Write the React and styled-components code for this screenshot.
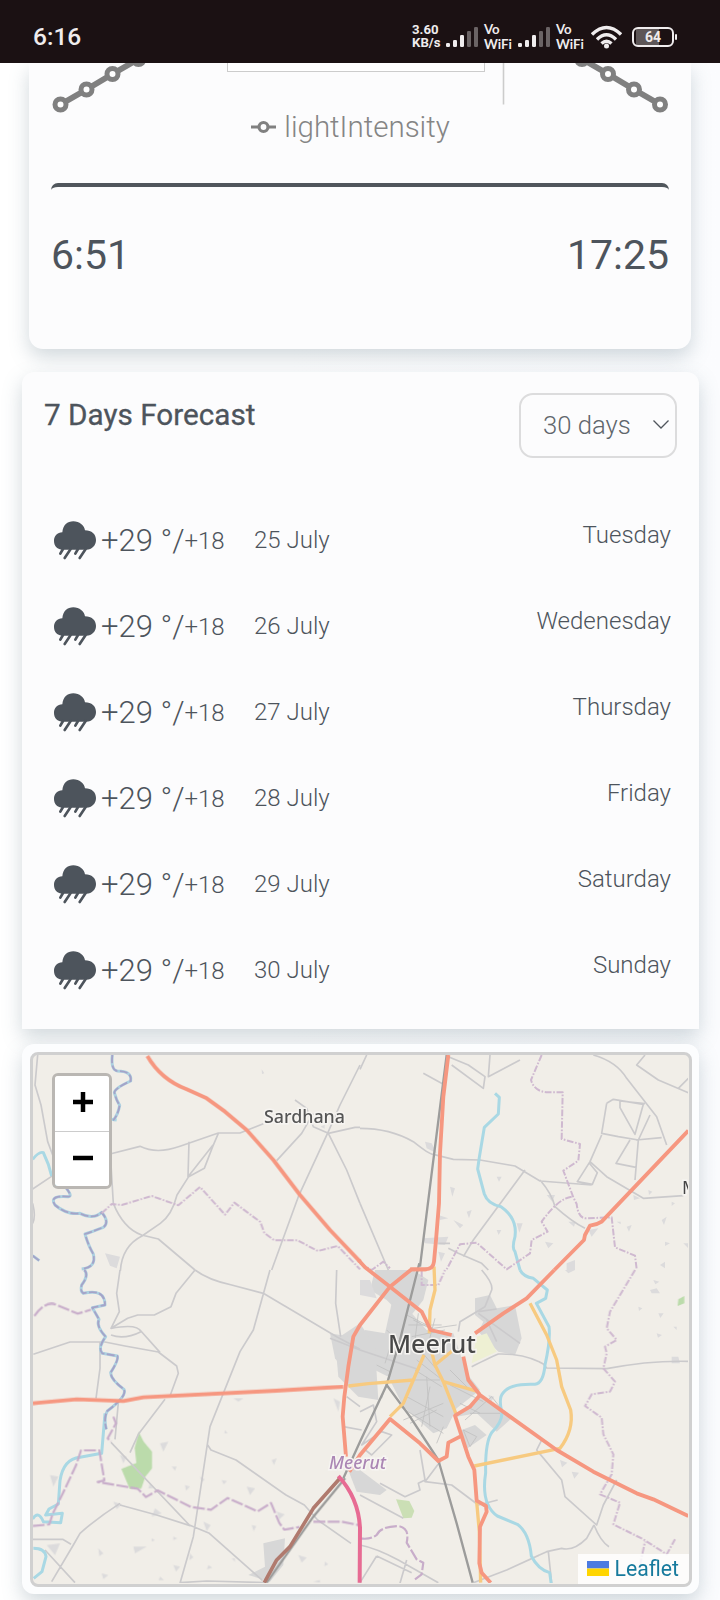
import React from "react";
import styled, { createGlobalStyle } from "styled-components";

const GlobalStyle = createGlobalStyle`
  * { box-sizing: border-box; }
  body { margin: 0; background: #fff; font-family: Roboto, "Liberation Sans", sans-serif; }
`;

const Screen = styled.div`
  width: 720px;
  height: 1600px;
  overflow: hidden;
  background: linear-gradient(90deg, #fff 40%, #fbfcfe);
  color: #4d545c;
`;

const StatusBar = styled.header`
  position: relative;
  z-index: 2;
  display: flex;
  align-items: center;
  justify-content: space-between;
  height: 62.5px;
  padding: 11px 42px 0 33px;
  background: #1b1113;
  color: #efeced;
`;
const Clock = styled.span`
  font-size: 24.5px;
  font-weight: 500;
`;
const StatusIcons = styled.div`
  display: flex;
  align-items: center;
`;
const Stack = styled.div`
  width: ${(p) => p.$width}px;
  margin-right: ${(p) => p.$gap}px;
  font-family: ${(p) => p.$family || "Roboto"}, sans-serif;
  font-size: ${(p) => p.$size}px;
  font-weight: 700;
  line-height: ${(p) => p.$line}px;
  white-space: nowrap;
`;
const SignalSvg = styled.svg`
  width: 32px;
  height: 22px;
  margin-right: 6px;
`;
const WifiSvg = styled.svg`
  width: 31px;
  height: 24px;
  margin: 0 10px 0 0;
`;
const Battery = styled.div`
  position: relative;
  display: flex;
  align-items: center;
  justify-content: center;
  width: 42px;
  height: 20px;
  margin-right: 4px;
  border: 2px solid #f0edee;
  border-radius: 6px;
  background: linear-gradient(90deg, #1b1113 2px, #5d5657 2px, #5d5657 25px, #1b1113 25px);
  font-size: 14px;
  font-weight: 700;
  &::after {
    content: "";
    position: absolute;
    right: -5px;
    width: 2px;
    height: 6px;
    border-radius: 1px;
    background: #f0edee;
  }
`;

const shadow = "0 8px 20px rgba(90, 116, 130, 0.28)";

const SunCard = styled.section`
  height: 286.5px;
  margin: 0 29px;
  border-radius: 0 0 14px 14px;
  background: #fcfcfd;
  box-shadow: ${shadow};
`;
const ChartSvg = styled.svg`
  display: block;
  width: 662px;
  height: 44px;
  overflow: visible;
`;
const Legend = styled.div`
  display: flex;
  align-items: center;
  justify-content: center;
  gap: 8px;
  height: 40px;
  padding-right: 19px;
  color: #858585;
  font-size: 29.5px;
  font-weight: 300;
`;
const Divider = styled.div`
  height: 14px;
  margin: 36.5px 22px 0;
  border-top: 4px solid #50565c;
  border-radius: 8px;
`;
const Times = styled.div`
  display: flex;
  justify-content: space-between;
  margin: 33px 22px 0;
  font-size: 41px;
  line-height: 50px;
`;

const ForecastCard = styled.section`
  position: relative;
  height: 657px;
  margin: 23px 21px 0 22px;
  padding: 21px 22px 0;
  border-radius: 12px 12px 0 0;
  background: #fcfcfd;
  box-shadow: ${shadow};
`;
const ForecastHead = styled.div`
  display: flex;
  justify-content: space-between;
  height: 100px;
`;
const Title = styled.h2`
  margin: 5px 0 0;
  font-size: 29.7px;
  font-weight: 400;
  line-height: 34px;
  -webkit-text-stroke: 0.3px currentColor;
`;
const Select = styled.button`
  display: flex;
  align-items: center;
  justify-content: space-between;
  width: 158px;
  height: 65px;
  padding: 0 6px 2px 22px;
  border: 2px solid #dcdcdd;
  border-radius: 14px;
  background: #fcfcfd;
  color: #60666c;
  font: 300 25.7px Roboto, sans-serif;
`;
const DayRow = styled.div`
  display: flex;
  align-items: center;
  height: 86px;
  padding: 8px 6px 0 10px;
`;
const RainSvg = styled.svg`
  width: 42px;
  height: 39px;
`;
const Temp = styled.div`
  width: 144px;
  margin-left: 5px;
  padding-right: 4px;
  font-size: 31px;
  font-weight: 300;
  white-space: nowrap;
  small {
    font-size: 24px;
    line-height: 1;
    vertical-align: 2px;
  }
`;
const DateText = styled.span`
  margin-left: 9px;
  font-size: 24px;
  font-weight: 300;
`;
const Weekday = styled(DateText)`
  margin: -11px 0 0 auto;
`;

const MapCard = styled.section`
  position: relative;
  height: 550px;
  margin: 15px 21px 0 22px;
  padding: 7.5px;
  border-radius: 12px;
  background: #fcfdfe;
  box-shadow: ${shadow};
`;
const MapFrame = styled.div`
  position: relative;
  height: 535px;
  border: 3.5px solid #d0d0d0;
  border-radius: 8px;
  overflow: hidden;
  background: #f1eee8;
`;
const MapSvg = styled.svg`
  display: block;
  width: 655px;
  height: 528px;
`;
const ZoomControl = styled.div`
  position: absolute;
  left: 19px;
  top: 18px;
  width: 60px;
  border: 3px solid #bab7b3;
  border-radius: 6px;
  overflow: hidden;
`;
const ZoomButton = styled.button`
  display: flex;
  align-items: center;
  justify-content: center;
  width: 100%;
  height: 55px;
  padding: 0 0 2px 2px;
  border: 0;
  border-top: ${(p) => (p.$divided ? "1px solid #ccc" : "0")};
  background: #fff;
`;
const Attribution = styled.div`
  position: absolute;
  right: 0;
  bottom: 0;
  display: flex;
  align-items: center;
  gap: 6px;
  width: 111px;
  height: 30px;
  padding: 0 0 1px 9px;
  background: rgba(255, 255, 255, 0.82);
  color: #177a9d;
  font-size: 21.2px;
`;

const Signal = () => (
  <SignalSvg viewBox="0 0 32 22">
    {[[0, 4], [7, 7], [14, 12], [21, 16], [28, 20]].map(([x, h], i) => (
      <rect key={x} x={x} y={21 - h} width="4" height={h} rx="1.2" fill={i < 3 ? "#f0edee" : "#6b6465"} />
    ))}
  </SignalSvg>
);

const Rain = () => (
  <RainSvg viewBox="0 0 126 117">
    <path fill="#4d545c" d="M25 34C27 12 40 1 58 1s33 13 35 27c20 0 33 12 33 29 0 16-12 29-29 29H27C10 86 0 75 0 60c0-15 10-25 25-26Z" />
    <path stroke="#4d545c" strokeWidth="8" strokeLinecap="round" d="M27 84 19 98M50 84 32 111M72 84 64 98M95 84 77 111" />
  </RainSvg>
);

const leftDots = [[31.5, 41.5], [57.5, 26.5], [83.5, 11], [109.5, -4]];
const rightDots = [[631, 41.5], [605, 26.5], [579, 11], [553, -4]];

/* Each feature is drawn in one of four map quadrants, three units per pixel. */
const quadrants = {
  nw: "translate(0 940) scale(.33333)",
  ne: "translate(360 940) scale(.33333)",
  sw: "translate(0 1270) scale(.33333)",
  se: "translate(360 1270) scale(.33333)",
};

const streams = [
  ["nw", "M337 345q-5 45 15 48 45 0 40 30-55 25-48 38 5 20 15 35-5 30-20 45M195 740q25 30 10 30-60-5-40 25 35 30 75 25 40 20 65-3 25 30 5 45-40 15-55 20 10 35 25 60 10 40-35 45M98 947l20 15"],
  ["sw", "M253 0q15 15-8 45-5 20 5 25 65-15 65 35l-38 8 20 35q-10 20 20 52-25 35-10 50l45 8q5 10-20 50 0 20 40 50 10 20-50 65-12 20-3 55"],
];

const layers = [
  { name: "urban", fill: "#d7d7d7", paths: [
    ["se", "M45 0h115l45 30-15 60-40 50-30-10-40-40-50-30Z"],
    ["se", "M95 100l60 30 45 50 80 10 40 120 40 50-70 55-30 60-40 15-90-80-45-90-60-30-50-60 40-50 60 10Z"],
    ["se", "M345 85l45-10 20 40 55-10 20 100-20 50-50-10-60-60 15-30-25-20Z"],
    ["se", "M360 375l100 65-50 45-60-55-60 10Z"],
    ["se", "M305 480l40-15 35 30-65 45Z"],
    ["se", "M-75 210l75-50 45 70 10 160-60-10-60-60Z"],
    ["se", "M-45 575l45 25 80 60-20 15-70-10Z"],
    ["sw", "M990 190l60 10-10 110-35-45Z"],
    ["sw", "M790 820l65-15-5 80-40 50-65-20 50-25Z"],
  ] },
  { name: "park", fill: "#b5d9a4", opacity: 0.9, paths: [
    ["sw", "M416 485l15 30 25 30v50l-20 25-12 35-35 2-25-60 45-18-5-45Z"],
    ["se", "M955 88l18-10v22l-20 8Z"],
  ] },
  { name: "grove", fill: "#cbdfb5", paths: [["se", "M108 688l40 5 15 30-8 20-25 2Z"]] },
  { name: "field", fill: "#eef0d3", paths: [["se", "M350 200l30-10 30 55-75 35Z"]] },
  { name: "hamlet", fill: "#dcdbdc", paths: [
    ["nw", "M315 940l45 10-10 35-20-8ZM785 388l8 12-7 2ZM962 560l12-6v12Z"],
    ["ne", "M195 605l20 5 15 30-30-15ZM270 740l15 5-8 25ZM320 815l15-5-8 25ZM280 840l30 15-10 10ZM410 710h15l-8 15ZM410 870h14l-8 15ZM560 765h25l-8 20ZM470 850h18l-10 28ZM555 905l25 5-15 15ZM625 845h22l-5 15ZM685 870l30-5-20 25ZM905 840l15-10-8 25ZM935 785l10 5-10 8ZM915 905l15 5-15 8ZM970 910h15v15ZM900 975l15-10v20ZM800 860l15-5-8 20ZM770 845h12v8ZM865 750l12 5-10 10ZM820 765l20 10-18 5ZM235 825l30 10-25 5ZM190 895l75-5-10 25-60-5ZM620 970l25-10v30h-25ZM235 935l20 5-12 25Z"],
    ["sw", "M360 555l20 5-10 20ZM480 520l25-5-15 30ZM515 590h15l-5 12ZM555 645l15 5-12 12ZM450 640l10 15h-15ZM600 620l14 8-8 8ZM815 570l15-5-8 20ZM740 650l25 5-15 20ZM665 630l16 3-10 10ZM340 695l25 8-15 14ZM465 715l20 15-30 10ZM610 755l22 10-12 18ZM755 765l14 3-8 15ZM830 725l24 8-16 15ZM150 615l25 5-15 30ZM295 835l15 15-12 8ZM400 830l40 0-35 20ZM455 805l10 5-10 5ZM520 800l12 5-12 5ZM570 850l10 12-12 8ZM520 885l20 5-12 15ZM625 885l12 8-16 5ZM695 865h10v10ZM895 855l25 8-15 15ZM975 875l10 8-12 5ZM305 910l20 5-15 12ZM480 920l12 10h-16ZM140 825l40-5-15 35ZM700 385h30l-15 10ZM675 480l8 10h-10ZM1000 385l20 10-5 30ZM940 935l20-5v8Z"],
    ["se", "M870 60l20-5 10 15h-25ZM880 30l18 5-12 8ZM835 110l12 5-10 8ZM895 130h16l-10 14ZM890 190l16 5-12 8ZM935 260h20l5 20h-25ZM600 570l22 8-16 14ZM635 605l22 3-14 18ZM385 375l18 5-10 15ZM0 30h30l20 55-50-10ZM615 0h30l-20 10ZM940 170h10v10Z"],
  ] },
  { name: "street", stroke: "#cbcacc", width: 5, paths: [
    ["nw", "M113 345l-8 90 18 60 20 110 15 40M98 747l60-40M330 642l90-23q50 25 120 0l115-40h65l70-28M655 580l-17 40-25 65-47 25-35 55q-15 60-50 85l-55 38q-60 30-65 105M567 605l-3 105 75-95M323 510l17 280q30 75 85 95l50 12 110 93M1080 375l-60 120-35 80-90 195-80 220M985 580l80-18h15M985 580l-45-20-20-55-35-25M985 580l55 110 40 100M940 520l-35 60-75 82M98 790q10 40 0 60"],
    ["ne", "M0 388l20-43M0 565q90 0 160 40 50 40 60 38l60 15 80 2 105 18 75 45 155 12M0 790l85 200M265 350l60 25 50 35-5 35-95-70M390 345l-5 65 95-50M190 400l60 33M495 690l-155 210-30 50M540 720q35 40 45 80 50 45 90 65M700 345q70 20 100 70l90 115 30 85M855 345l-25 30 65 45 90 38M955 445l30-30M740 490l20-12 90 15-25 90-45-80 0-20 75 8M740 490l-15 90 50 10 60 10 35-75M905 593l-77 7M725 585l-35 80-38 60 45 8 15-35-25-30M690 665l50 45 110 65 120-8M835 600l-10 120M810 600l-42 70 60 12M265 925l30 15 70 30 20 20M270 910h-35"],
    ["sw", "M100 253l110-37h105l60 12 100 18M475 246l55 42 5 22-25 68M360 0l-10 70 8 55-25 50 50-30 30-10h50l50-25 15-40L585 0M333 175q80-15 90 10-50 25-90 10M420 180l60 67M585 0q40 30 110 45l95 25 220 130 70 38M810 0l-50 180-40 65-90 225-50 330-40 140M1010 0l-3 100 15 100M300 215v80l-12 90M495 388l-80 105-25 55M333 517l235 248 60 25 160 142M623 525l10 15 75 30 150 105 55 30 40 45 100 70M360 705l110 30 100 32M360 700q-70 45-120 90l-20 35-65 110M98 808h90l25 15M135 840l90 98M355 398l-10 110M540 938l80-5 180 5M1030 470l55 10M1040 380l40 30"],
    ["se", "M-90 205l90 35 180 60M335 290q60-30 80-38 80-2 135 30l10 12 180 2q130-25 245-22M365 0q35 40 30 60l-20 50-75 45-5 30M355 125l55-8M355 130l125 90M380 150l30 65M0 425l40-20 10 50-45 70 60-40 30 10-60 60-25-20M180 540l15 90-20 10 5 20-45 20-75-40M240 575l-45 60 80 10 80 60 58-15M545 510l-15 30 75 90 10 50 95 85 20-60 40-75M702 765l-22 40q-40 40-75 30l-45 10-120 55-100 38M702 765q20 50 45 65M565 845l10 95M0 825q50 10 115 45l120 68M50 858l-50 80M130 745l-130-70M50 858l105 50M140 870l-20 70"],
  ] },
  { name: "block", stroke: "#c0c0c1", width: 2.5, paths: [
    ["se", "M140 135l80 40 70-10M145 165h100M155 200l100-20M160 150l80 40M175 130l-10 80M225 145l-25 95M170 270l90 70M165 300l80 50M180 240l60 70M150 330l90 0M210 350l-25 120M140 380l110 60M120 410l130 80M200 320l10 150M250 400l-120 50M250 470l-20 50M270 300l60 60M270 345l100 50M330 430l90 0M315 450l80-70 40 50M310 480l40 20-20 30-20-50M300 400l60 30M150 460l80-40M80 180l20 20-25 80M50 285l40 20-25 80"],
  ] },
  { name: "river", stroke: "#a9d8e4", width: 9, paths: [
    ["nw", "M98 658q20-25 32-20l15 35 10 35M160 735q30 10 50 2M350 540l-40-5"],
    ["ne", "M405 460l13 12-3 50-42 40-15 90-5 35 20 75q10 30 50 38 50 35 42 90-10 35 0 45l15 55"],
    ["sw", "M315 430l-10 120-65 12q-50 5-60 70l-5 70-28 15-10 18 50-5-5 28-52-3q-15-35-32-8M100 835q35 0 38 25l-12 45-25 20"],
    ["se", "M480 0q10 20 40 25l42 35-5 25-28 15 38 70q5 40-12 115-5 55-30 58-75-3-95 25-15 15-5 55 5 30-30 65-20 30-18 120-15 95 35 130l60 25q35 25 42 95 20 40 55 50l18 130"],
  ] },
  { name: "stream", stroke: "#acd0e0", width: 9, paths: streams },
  { name: "stream-border", stroke: "#a5a3c8", width: 5.5, dash: "24 7", paths: streams },
  { name: "boundary", stroke: "#cfb9d0", width: 6, dash: "20 5 5 5", paths: [
    ["nw", "M305 820l30-28 30 3 90-27 80 28 65-55 75 83 28-36 78 58 12 33 30 22h70l60 32 60-15 67 70"],
    ["ne", "M545 345l-32 75q10 35 50 37h45l-3 140 55 15-5 50-45 30 30 80 10 20q5 45 30 43l75-3 10 90 60 25 5 40M635 770q-40 5-90 75l18 30-48 25-5 40-70 48-90-80-50 5-40 75M0 970l35 20 35-25 20 20"],
    ["se", "M825 0l-75 125-10 50 30 35-35 20 5 20-10 45 35 40-15 30-55 8-20 35 50 35 5 50 30 60-5 60-35 60 60 25-20 65 90 45 70 45 25-45M840 885l15-70M185 0v45h50l20-45"],
  ] },
  { name: "district", stroke: "#c8adca", width: 6.5, dash: "36 7", paths: [
    ["sw", "M103 138q35-50 70-32l60 25 40-12M98 768l50-5 10-32 30-60 40-85 15-45h55l15 90-20 5 120 20 25 25 35-20 100 50 60 8 50-35 90 40 40-25 25 60 15 20 45-8M940 755h85l50 10M340 440l8 20-25 45 10 10"],
    ["se", "M0 805q30 5 50-10 10-25 65-27 35 5 25 50l30 50 20 10-5 35-20 15"],
  ] },
  { name: "rail", stroke: "#9c9c9b", width: 7, paths: [
    ["ne", "M260 345L215 700 180 980"],
    ["se", "M178-20L120 210 80 345 0 515-50 625M80 345l70 95 85 130 55 190 48 178"],
    ["sw", "M1035 625l-95 115-140 198"],
  ] },
  { name: "secondary", stroke: "#f7ca80", width: 10, paths: [
    ["se", "M222-10l3 70-15 60-2 70M-35 348l60-7 135-11 32-75M160 330l-30 70-40 40M280 240l-55 45 25 50 40 102M250 335l105 30M215 245l10 40M510 100l50 95 30 75 15 80 27 70q10 60-32 115L343 588M350 695l8 90 4 153"],
  ] },
  { name: "trunk", stroke: "#f69780", width: 11.5, paths: [
    ["nw", "M442 348q40 70 118 100l60 27 55 40 65 55 80 90 80 105 90 105 90 95"],
    ["ne", "M265 345l-15 125-10 170-3 150-9 110-6 65q-2 23-27 23h-45M985 572L725 845q-15 10-35 12l-15 28-3 15-89 90"],
    ["sw", "M98 400l132-12 140 5 60-11 400-20 200-12"],
    ["se", "M-4-29L15-8l75 58 95 75 27 55 63 15M200-2h-45L90 50 0 165l-20 35-15 90-12 90-5 60 10 120M583 0l-83 85-70 45-85 60M310 260l15 70 35 45 90 65 140 100 110 65 130 65 50 18 105 50M360 375l-30 35-45 27 40 123 18 40 7 92 28 16 2 17-20 45-2 110 7 28 27 30M300 500l-35 18-5 42-25 13-55-53-90-73L0 555l-32 50"],
  ] },
  { name: "rail-main", stroke: "#b07a6e", width: 11, paths: [["sw", "M1020 625l-80 90-70 115-40 40-37 68"]] },
  { name: "motorway", stroke: "#e76b93", width: 12, paths: [["sw", "M1015 618q60 65 65 155l-1 165"]] },
];

const labelHalo = { stroke: "#f7f5f2", strokeWidth: 3, paintOrder: "stroke", fontFamily: "Noto Sans, sans-serif" };

const MeerutMap = () => (
  <MapSvg viewBox="33 1055 655 528" preserveAspectRatio="none">
    {layers.map((l) => (
      <g key={l.name} fill={l.fill || "none"} opacity={l.opacity} stroke={l.stroke} strokeWidth={l.width} strokeDasharray={l.dash} strokeLinejoin="round">
        {l.paths.map(([q, d]) => <path key={d} d={d} transform={quadrants[q]} />)}
      </g>
    ))}
    <text x="264" y="1123" fontSize="18.500" fontWeight="500" textLength="81" lengthAdjust="spacingAndGlyphs" fill="#555" {...labelHalo}>Sardhana</text>
    <text x="388" y="1352.5" fontSize="25" fontWeight="500" textLength="88" lengthAdjust="spacingAndGlyphs" fill="#484848" {...labelHalo}>Meerut</text>
    <text x="329" y="1469" fontSize="18.500" fontWeight="500" textLength="57" lengthAdjust="spacingAndGlyphs" fontStyle="italic" fill="#ab86b4" {...labelHalo}>Meerut</text>
    <text x="682" y="1193.5" fontSize="18" fill="#444" {...labelHalo}>M</text>
  </MapSvg>
);

const days = [
  ["25 July", "Tuesday"],
  ["26 July", "Wedenesday"],
  ["27 July", "Thursday"],
  ["28 July", "Friday"],
  ["29 July", "Saturday"],
  ["30 July", "Sunday"],
];

export default function App() {
  return (
    <Screen>
      <GlobalStyle />
      <StatusBar>
        <Clock>6:16</Clock>
        <StatusIcons>
          <Stack $width={28} $gap={6} $size={13.2} $line={12.8}>3.60<br />KB/s</Stack>
          <Signal />
          <Stack $width={28} $gap={6} $size={13.2} $line={14.5} $family="Lato">Vo<br />WiFi</Stack>
          <Signal />
          <Stack $width={28} $gap={7} $size={13.2} $line={14.5} $family="Lato">Vo<br />WiFi</Stack>
          <WifiSvg viewBox="0 0 31 24" fill="none" stroke="#f0edee" strokeWidth="3.4">
            <path d="M1 9.5Q15.5-4.500 30 9.500M6 14.500Q15.500 5 25 14.500M10.500 18.500Q15.500 14 20.500 18.500" />
            <circle cx="15.500" cy="21" r="2.500" fill="#f0edee" stroke="none" />
          </WifiSvg>
          <Battery>64</Battery>
        </StatusIcons>
      </StatusBar>

      <SunCard>
        <ChartSvg viewBox="0 0 662 44">
          <rect x="198.500" y="-40" width="257" height="48.500" fill="#fff" stroke="#ccc" />
          <path d="M474.500 0V41.500" stroke="#ccc" strokeWidth="1.600" />
          {[leftDots, rightDots].map((dots, i) => (
            <g key={i} fill="#fff" stroke="#808080" strokeWidth="5">
              <polyline fill="none" strokeWidth="6" points={dots.join(" ")} />
              {dots.map(([x, y]) => <circle key={x} cx={x} cy={y} r="5.500" />)}
            </g>
          ))}
        </ChartSvg>
        <Legend>
          <svg width="25" height="14" viewBox="0 0 25 14" fill="none" stroke="#808080" strokeWidth="3.200">
            <path d="M0 7h8M17 7h8" />
            <circle cx="12.500" cy="7" r="4.500" />
          </svg>
          lightIntensity
        </Legend>
        <Divider />
        <Times><span>6:51</span><span>17:25</span></Times>
      </SunCard>

      <ForecastCard>
        <ForecastHead>
          <Title>7 Days Forecast</Title>
          <Select>
            30 days
            <svg width="16" height="9" viewBox="0 0 16 9" fill="none" stroke="#50565c" strokeWidth="1.300">
              <path d="M.5.500 8 8l7.500-7.500" />
            </svg>
          </Select>
        </ForecastHead>
        {days.map(([date, weekday]) => (
          <DayRow key={date}>
            <Rain />
            <Temp>+29 °/<small>+18</small></Temp>
            <DateText>{date}</DateText>
            <Weekday>{weekday}</Weekday>
          </DayRow>
        ))}
      </ForecastCard>

      <MapCard>
        <MapFrame>
          <MeerutMap />
          <ZoomControl>
            <ZoomButton aria-label="Zoom in">
              <svg width="20" height="20" viewBox="0 0 20 20"><path d="M0 10h20M10 0v20" stroke="#000" strokeWidth="4.500" /></svg>
            </ZoomButton>
            <ZoomButton $divided aria-label="Zoom out">
              <svg width="20" height="20" viewBox="0 0 20 20"><path d="M0 10h20" stroke="#000" strokeWidth="4.500" /></svg>
            </ZoomButton>
          </ZoomControl>
          <Attribution>
            <svg width="22" height="15" viewBox="0 0 22 15">
              <path fill="#4c7be1" d="M0 0h22v7.500H0z" />
              <path fill="#ffd500" d="M0 7.500h22V15H0z" />
            </svg>
            Leaflet
          </Attribution>
        </MapFrame>
      </MapCard>
    </Screen>
  );
}
